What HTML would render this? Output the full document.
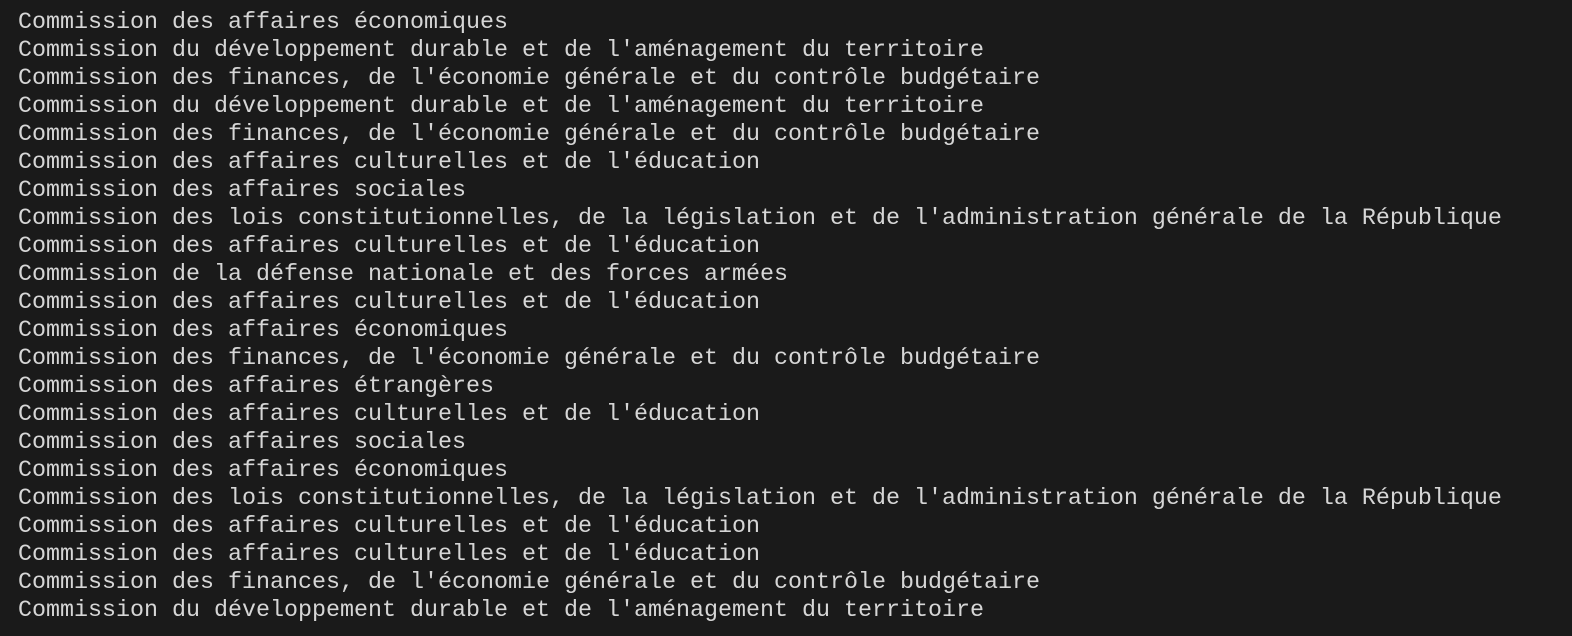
<!DOCTYPE html>
<html><head><meta charset="utf-8"><style>
html,body{margin:0;padding:0;background:#1a1a1a;width:1572px;height:636px;overflow:hidden}
pre{margin:0;padding:9px 0 0 18px;font-family:"Liberation Mono",monospace;font-size:23.34px;line-height:28px;color:#d6d6d6;white-space:pre}
</style></head><body><pre>Commission des affaires économiques
Commission du développement durable et de l'aménagement du territoire
Commission des finances, de l'économie générale et du contrôle budgétaire
Commission du développement durable et de l'aménagement du territoire
Commission des finances, de l'économie générale et du contrôle budgétaire
Commission des affaires culturelles et de l'éducation
Commission des affaires sociales
Commission des lois constitutionnelles, de la législation et de l'administration générale de la République
Commission des affaires culturelles et de l'éducation
Commission de la défense nationale et des forces armées
Commission des affaires culturelles et de l'éducation
Commission des affaires économiques
Commission des finances, de l'économie générale et du contrôle budgétaire
Commission des affaires étrangères
Commission des affaires culturelles et de l'éducation
Commission des affaires sociales
Commission des affaires économiques
Commission des lois constitutionnelles, de la législation et de l'administration générale de la République
Commission des affaires culturelles et de l'éducation
Commission des affaires culturelles et de l'éducation
Commission des finances, de l'économie générale et du contrôle budgétaire
Commission du développement durable et de l'aménagement du territoire</pre></body></html>
